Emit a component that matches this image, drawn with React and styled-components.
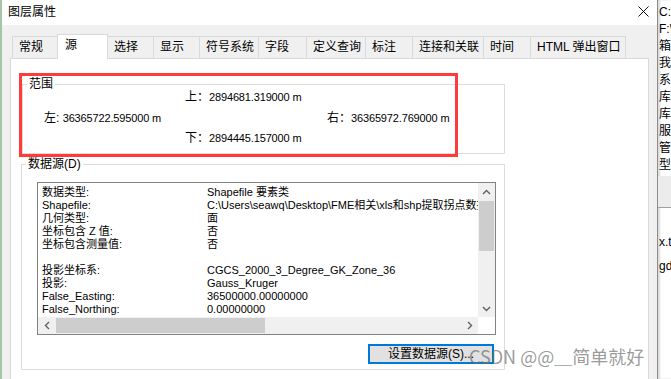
import React from "react";
import styled, { createGlobalStyle } from "styled-components";

const tabs = [
    { label: "常规", width: 46 },
    { label: "源", width: 51, active: true },
    { label: "选择", width: 47 },
    { label: "显示", width: 47 },
    { label: "符号系统", width: 60 },
    { label: "字段", width: 49 },
    { label: "定义查询", width: 60 },
    { label: "标注", width: 48 },
    { label: "连接和关联", width: 72 },
    { label: "时间", width: 48 },
    { label: "HTML 弹出窗口", width: 96 },
];

const sourceRows = [
    ["数据类型:", "Shapefile 要素类"],
    ["Shapefile:", "C:\\Users\\seawq\\Desktop\\FME相关\\xls和shp提取拐点数据\\面.shp"],
    ["几何类型:", "面"],
    ["坐标包含 Z 值:", "否"],
    ["坐标包含测量值:", "否"],
    ["", ""],
    ["投影坐标系:", "CGCS_2000_3_Degree_GK_Zone_36"],
    ["投影:", "Gauss_Kruger"],
    ["False_Easting:", "36500000.00000000"],
    ["False_Northing:", "0.00000000"],
];

const backLines = ["C:\\Us", "F:\\", "箱", "我的", "系统", "库", "库", "服", "管", "型"];

const App = () => {
    return (
        <>
            <GlobalStyle />
            <Screen>
                <LeftEdge />
                <Dialog>
                    <TitleBar>
                        <Title>图层属性</Title>
                        <CloseButton>
                            <svg width="11" height="11" viewBox="0 0 11 11">
                                <path d="M0.5 0.5 L10.5 10.5 M10.5 0.5 L0.5 10.5" stroke="#111" strokeWidth="1" />
                            </svg>
                        </CloseButton>
                    </TitleBar>
                    <Body>
                        <TabRow>
                            {tabs.map((t) => (
                                <Tab key={t.label} $width={t.width} $active={t.active}>
                                    {t.label}
                                </Tab>
                            ))}
                        </TabRow>
                        <Panel>
                            <Group>
                                <Legend>范围</Legend>
                                <ExtentGrid>
                                    <Coord $col={3} $row={1}>
                                        <CoordLabel>上：</CoordLabel>
                                        <CoordValue>2894681.319000 m</CoordValue>
                                    </Coord>
                                    <Coord $col={2} $row={2}>
                                        <CoordLabel>左: </CoordLabel>
                                        <CoordValue>36365722.595000 m</CoordValue>
                                    </Coord>
                                    <Coord $col={4} $row={2}>
                                        <CoordLabel>右：</CoordLabel>
                                        <CoordValue>36365972.769000 m</CoordValue>
                                    </Coord>
                                    <Coord $col={3} $row={3}>
                                        <CoordLabel>下：</CoordLabel>
                                        <CoordValue>2894445.157000 m</CoordValue>
                                    </Coord>
                                </ExtentGrid>
                            </Group>
                            <SourceGroup>
                                <Legend>数据源(D)</Legend>
                                <SourceBody>
                                    <ListBox>
                                        <ListContent>
                                            {sourceRows.map(([k, v], i) => (
                                                <ListRow key={i}>
                                                    <ListKey>{k}</ListKey>
                                                    <ListValue>{v}</ListValue>
                                                </ListRow>
                                            ))}
                                        </ListContent>
                                        <VScroll>
                                            <ArrowBox>
                                                <svg width="9" height="6" viewBox="0 0 9 6">
                                                    <path d="M1 5 L4.5 1.5 L8 5" stroke="#606060" strokeWidth="1.4" fill="none" />
                                                </svg>
                                            </ArrowBox>
                                            <VThumb />
                                            <Spacer />
                                            <ArrowBox>
                                                <svg width="9" height="6" viewBox="0 0 9 6">
                                                    <path d="M1 1 L4.5 4.5 L8 1" stroke="#606060" strokeWidth="1.4" fill="none" />
                                                </svg>
                                            </ArrowBox>
                                        </VScroll>
                                        <HScroll>
                                            <ArrowBox>
                                                <svg width="6" height="9" viewBox="0 0 6 9">
                                                    <path d="M5 1 L1.5 4.5 L5 8" stroke="#606060" strokeWidth="1.4" fill="none" />
                                                </svg>
                                            </ArrowBox>
                                            <HThumb />
                                            <Spacer />
                                            <ArrowBox>
                                                <svg width="6" height="9" viewBox="0 0 6 9">
                                                    <path d="M1 1 L4.5 4.5 L1 8" stroke="#606060" strokeWidth="1.4" fill="none" />
                                                </svg>
                                            </ArrowBox>
                                        </HScroll>
                                        <Corner />
                                    </ListBox>
                                    <ButtonRow>
                                        <Button>设置数据源(S)...</Button>
                                    </ButtonRow>
                                </SourceBody>
                            </SourceGroup>
                            <Highlight />
                        </Panel>
                    </Body>
                </Dialog>
                <BackWindow>
                    <BackTop>
                        {backLines.map((l, i) => (
                            <BackLine key={i}>{l}</BackLine>
                        ))}
                    </BackTop>
                    <BackBand />
                    <BackBottom>
                        <BackLine>x.tbx</BackLine>
                        <BackLine>gdb</BackLine>
                    </BackBottom>
                </BackWindow>
                <Watermark>CSDN @@＿简单就好</Watermark>
            </Screen>
        </>
    );
};

export default App;

// 스타일 정의
const GlobalStyle = createGlobalStyle`
    html, body {
        margin: 0;
        padding: 0;
        width: 671px;
        height: 379px;
        overflow: hidden;
        background: #fff;
    }
    * {
        box-sizing: border-box;
    }
`;

const Screen = styled.div`
    position: relative;
    display: flex;
    width: 671px;
    height: 379px;
    overflow: hidden;
    font-family: "Liberation Sans", "Noto Sans CJK SC", sans-serif;
    color: #000;
`;

const LeftEdge = styled.div`
    width: 2px;
    background: #a7c4a7;
`;

const Dialog = styled.div`
    width: 656px;
    display: flex;
    flex-direction: column;
    background: #f0f0f0;
    border-right: 1px solid #8c8c8c;
`;

const TitleBar = styled.div`
    height: 25px;
    background: #fff;
    display: flex;
    align-items: center;
    justify-content: space-between;
    padding: 0 8px 0 6px;
`;

const Title = styled.div`
    font-size: 12px;
    line-height: 14px;
    margin-top: -2px;
`;

const CloseButton = styled.div`
    display: flex;
    margin-top: -2px;
`;

const Body = styled.div`
    flex: 1;
    display: flex;
    flex-direction: column;
    padding: 9px 8px 0 8px;
`;

const TabRow = styled.div`
    display: flex;
    align-items: flex-end;
    height: 24px;
    padding-left: 2px;
`;

const Tab = styled.div`
    position: relative;
    width: ${(p) => p.$width}px;
    height: ${(p) => (p.$active ? 25 : 22)}px;
    margin-bottom: ${(p) => (p.$active ? -1 : 0)}px;
    margin-left: -1px;
    z-index: ${(p) => (p.$active ? 2 : 1)};
    background: ${(p) => (p.$active ? "#fff" : "#f0f0f0")};
    border: 1px solid #d9d9d9;
    border-bottom: none;
    padding: ${(p) => (p.$active ? "3px 0 0 7px" : "3px 0 0 6px")};
    font-size: 12px;
    line-height: 15px;
    white-space: nowrap;

    &:first-child {
        margin-left: 0;
    }
`;

const Panel = styled.div`
    position: relative;
    flex: 1;
    background: #fff;
    border: 1px solid #d9d9d9;
    border-bottom: none;
    padding: 18px 0 0 11px;
`;

const Group = styled.fieldset`
    width: 483px;
    margin: 0;
    padding: 0 0 9px 0;
    border: 1px solid #dcdcdc;
    min-width: 0;
`;

const Legend = styled.legend`
    margin-left: 4px;
    padding: 0 2px;
    font-size: 12px;
    line-height: 14px;
`;

const ExtentGrid = styled.div`
    display: grid;
    grid-template-columns: 21px 141px 142px 1fr;
    grid-template-rows: 12px 12px 12px;
    row-gap: 8.5px;
`;

const Coord = styled.div`
    grid-column: ${(p) => p.$col};
    grid-row: ${(p) => p.$row};
    display: flex;
    align-items: center;
    white-space: nowrap;
`;

const CoordLabel = styled.span`
    font-size: 12px;
    line-height: 12px;
    white-space: pre;
`;

const CoordValue = styled.span`
    font-size: 11px;
    line-height: 12px;
    letter-spacing: -0.15px;
`;

const SourceGroup = styled(Group)`
    margin-top: 3px;
    margin-left: -1px;
    width: 484px;
    height: 213px;
    padding: 0;
`;

const SourceBody = styled.div`
    display: flex;
    flex-direction: column;
    padding: 0 8px 5px 15px;
`;

const ListBox = styled.div`
    margin-top: 11px;
    height: 153px;
    border: 1px solid #828282;
    display: grid;
    grid-template-columns: 1fr 17px;
    grid-template-rows: 1fr 17px;
    overflow: hidden;
`;

const ListContent = styled.div`
    padding: 3px 0 0 4px;
    overflow: hidden;
`;

const ListRow = styled.div`
    display: grid;
    grid-template-columns: 165px 1fr;
    height: 13px;
    font-size: 11px;
    line-height: 13px;
    white-space: nowrap;
`;

const ListKey = styled.span`
    overflow: hidden;
`;

const ListValue = styled.span`
    overflow: hidden;
`;

const VScroll = styled.div`
    background: #f0f0f0;
    display: flex;
    flex-direction: column;
`;

const HScroll = styled.div`
    background: #f0f0f0;
    display: flex;
`;

const ArrowBox = styled.div`
    width: 17px;
    height: 17px;
    display: flex;
    align-items: center;
    justify-content: center;
    flex-shrink: 0;
`;

const VThumb = styled.div`
    margin: 1px 1px 0 1px;
    height: 50px;
    background: #cdcdcd;
`;

const HThumb = styled.div`
    margin: 1px 0 1px 1px;
    width: 209px;
    background: #cdcdcd;
`;

const Spacer = styled.div`
    flex: 1;
`;

const Corner = styled.div`
    background: #fff;
`;

const ButtonRow = styled.div`
    display: flex;
    justify-content: flex-end;
    margin-top: 9px;
    padding-right: 2px;
`;

const Button = styled.button`
    width: 126px;
    height: 20px;
    padding: 0;
    background: #e1e1e1;
    border: 2px solid #0078d7;
    font-family: "Liberation Sans", "Noto Sans CJK SC", sans-serif;
    font-size: 12px;
    line-height: 14px;
    color: #000;
`;

const Highlight = styled.div`
    position: absolute;
    left: 8px;
    top: 14px;
    width: 439px;
    height: 84px;
    border: 3px solid #ff3a3a;
    pointer-events: none;
`;

const BackWindow = styled.div`
    flex: 1;
    display: flex;
    flex-direction: column;
    background: #fff;
    box-shadow: inset 2px 0 2px rgba(0, 0, 0, 0.15);
    overflow: hidden;
`;

const BackTop = styled.div`
    display: flex;
    flex-direction: column;
    padding-top: 4px;
    height: 176px;
`;

const BackLine = styled.div`
    height: 17px;
    font-size: 12px;
    line-height: 17px;
    white-space: nowrap;
    padding-left: 1px;
`;

const BackBand = styled.div`
    height: 32px;
    background: #ececec;
    border-bottom: 1px solid #a0a0a0;
`;

const BackBottom = styled.div`
    display: flex;
    flex-direction: column;
    gap: 7px;
    padding-top: 26px;
`;

const Watermark = styled.div`
    position: absolute;
    left: 469px;
    top: 345px;
    font-family: "Noto Sans CJK SC", sans-serif;
    font-size: 18px;
    line-height: 22px;
    color: rgba(110, 110, 110, 0.7);
    white-space: nowrap;
    pointer-events: none;
`;
